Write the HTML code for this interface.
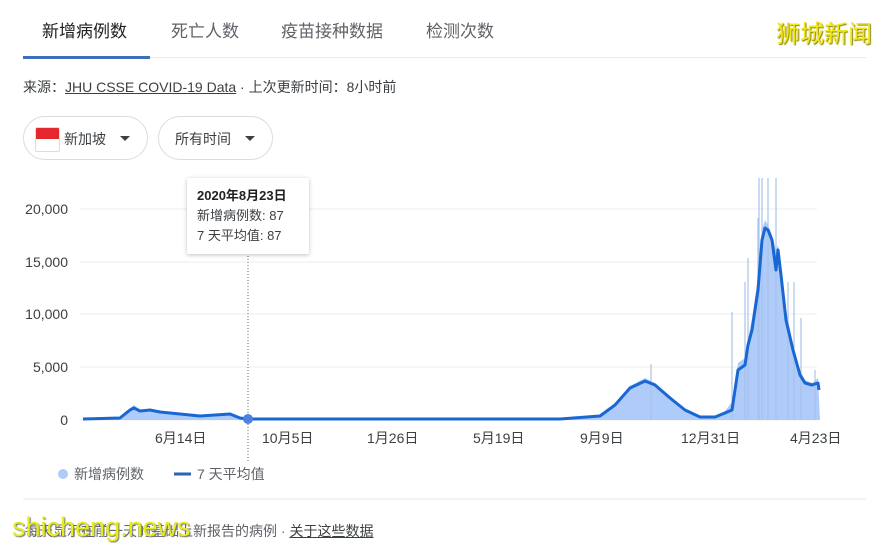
<!DOCTYPE html>
<html><head><meta charset="utf-8"><style>
body{margin:0;width:894px;height:552px;background:#fff;font-family:"Liberation Sans","Noto Sans CJK SC",sans-serif;position:relative;overflow:hidden;color:#202124}
.a{position:absolute;white-space:nowrap}
.tab{font-size:17px;color:#5f6368;top:17px}
.pill{position:absolute;top:116px;height:44px;border:1px solid #dadce0;border-radius:22px;box-sizing:border-box;font-size:14px;color:#3c4043}
.tri{display:block;width:0;height:0;border-left:5px solid transparent;border-right:5px solid transparent;border-top:5px solid #3c4043}
.yl{font-size:14px;color:#3c4043;right:826px;text-align:right}
.xl{font-size:14px;color:#3c4043;top:428px}
</style></head><body>
<div class="a tab" style="left:42px;color:#202124">新增病例数</div>
<div class="a tab" style="left:171px">死亡人数</div>
<div class="a tab" style="left:281px">疫苗接种数据</div>
<div class="a tab" style="left:426px">检测次数</div>
<div class="a" style="left:776px;top:14px;font-size:24px;color:#f0e81a;text-shadow:1px 1px 1px #8a8000">狮城新闻</div>
<div class="a" style="left:23px;top:56px;width:127px;height:3px;background:#3c6fb7"></div>
<div class="a" style="left:150px;top:57px;width:716px;height:1px;background:#e8eaed"></div>
<div class="a" style="left:23px;top:77px;font-size:14px;color:#3c4043">来源：<span style="text-decoration:underline">JHU CSSE COVID-19 Data</span> · 上次更新时间：8小时前</div>
<div class="pill" style="left:23px;width:125px"><div class="a" style="left:11px;top:10px;width:23px;height:23px;border:1px solid #ddd;border-radius:2px;overflow:hidden"><div style="height:11px;background:#e4262f"></div></div><span class="a" style="left:40px;top:12px">新加坡</span><span class="a" style="left:96px;top:19px"><i class="tri"></i></span></div>
<div class="pill" style="left:158px;width:115px"><span class="a" style="left:16px;top:12px">所有时间</span><span class="a" style="left:86px;top:19px"><i class="tri"></i></span></div>
<div class="a yl" style="top:201px">20,000</div>
<div class="a yl" style="top:254px">15,000</div>
<div class="a yl" style="top:306px">10,000</div>
<div class="a yl" style="top:359px">5,000</div>
<div class="a yl" style="top:412px">0</div>
<svg class="a" style="left:0;top:0" width="894" height="552">
<g stroke="#ececec" stroke-width="1"><line x1="80" x2="817" y1="209" y2="209"/><line x1="80" x2="817" y1="262" y2="262"/><line x1="80" x2="817" y1="314" y2="314"/><line x1="80" x2="817" y1="367" y2="367"/><line x1="80" x2="817" y1="420" y2="420"/></g>
<line x1="248" x2="248" y1="256" y2="462" stroke="#666" stroke-dasharray="1,2"/>
<path d="M83 420 L83 419 L120 418 L130 408 L134 405 L140 410 L150 409 L160 411 L200 415 L230 413 L240 417 L248 419 L560 419 L600 415 L615 404 L630 386 L645 378 L655 383 L670 396 L685 409 L700 416 L715 416 L725 411 L732 402 L738 363 L745 358 L748 340 L752 318 L758 278 L762 230 L765 220 L768 225 L772 235 L776 250 L778 245 L781 265 L786 310 L793 345 L800 370 L805 380 L812 383 L818 378 L820 420 Z" fill="#aecbfa"/>
<g stroke="#a8c3ea" stroke-width="1.2"><line x1="732" x2="732" y1="420" y2="312"/><line x1="745" x2="745" y1="420" y2="282"/><line x1="748" x2="748" y1="420" y2="258"/><line x1="758" x2="758" y1="420" y2="218"/><line x1="759" x2="759" y1="420" y2="178"/><line x1="762" x2="762" y1="420" y2="178"/><line x1="768" x2="768" y1="420" y2="178"/><line x1="776" x2="776" y1="420" y2="178"/><line x1="788" x2="788" y1="420" y2="282"/><line x1="794" x2="794" y1="420" y2="282"/><line x1="801" x2="801" y1="420" y2="318"/><line x1="815" x2="815" y1="420" y2="370"/><line x1="651" x2="651" y1="420" y2="364"/></g>
<path d="M83 419 L120 418 L130 410 L134 408 L140 411 L150 410 L160 412 L200 416 L230 414 L240 418 L248 419 L560 419 L600 416 L615 405 L630 388 L645 381 L655 385 L670 398 L685 410 L700 417 L715 417 L725 413 L732 410 L738 370 L745 365 L748 345 L752 330 L758 290 L762 240 L765 228 L768 230 L772 240 L776 270 L778 250 L781 275 L786 320 L793 350 L800 375 L805 383 L812 385 L818 383 L819 390" fill="none" stroke="#1967d2" stroke-width="3" stroke-linejoin="round"/>
<circle cx="248" cy="419" r="5" fill="#4f80e1"/>
<line x1="23" x2="866" y1="499" y2="499" stroke="#e8eaed"/>
<circle cx="63" cy="474" r="5" fill="#aecbfa"/>
<line x1="174" x2="191" y1="474" y2="474" stroke="#2a64b3" stroke-width="3"/>
</svg>
<div class="a" style="left:187px;top:178px;width:122px;height:76px;background:#fff;box-shadow:0 1px 4px rgba(0,0,0,.25);border-radius:2px;font-size:13px;line-height:20px;padding:8px 10px;box-sizing:border-box;color:#3c4043"><b style="color:#202124">2020年8月23日</b><br>新增病例数: 87<br>7 天平均值: 87</div>
<div class="a xl" style="left:155px">6月14日</div>
<div class="a xl" style="left:262px">10月5日</div>
<div class="a xl" style="left:367px">1月26日</div>
<div class="a xl" style="left:473px">5月19日</div>
<div class="a xl" style="left:580px">9月9日</div>
<div class="a xl" style="left:681px">12月31日</div>
<div class="a xl" style="left:790px">4月23日</div>
<div class="a" style="left:74px;top:464px;font-size:14px;color:#5f6368">新增病例数</div>
<div class="a" style="left:197px;top:464px;font-size:14px;color:#5f6368">7 天平均值</div>
<div class="a" style="left:25px;top:521px;font-size:14px;color:#5f6368">每天显示在前一天的基础上新报告的病例 · <span style="text-decoration:underline;color:#3c4043">关于这些数据</span></div>
<div class="a" style="left:12px;top:512px;font-size:27px;color:#e6ec20;text-shadow:1px 1px 1px #777">shicheng.news</div>
</body></html>
